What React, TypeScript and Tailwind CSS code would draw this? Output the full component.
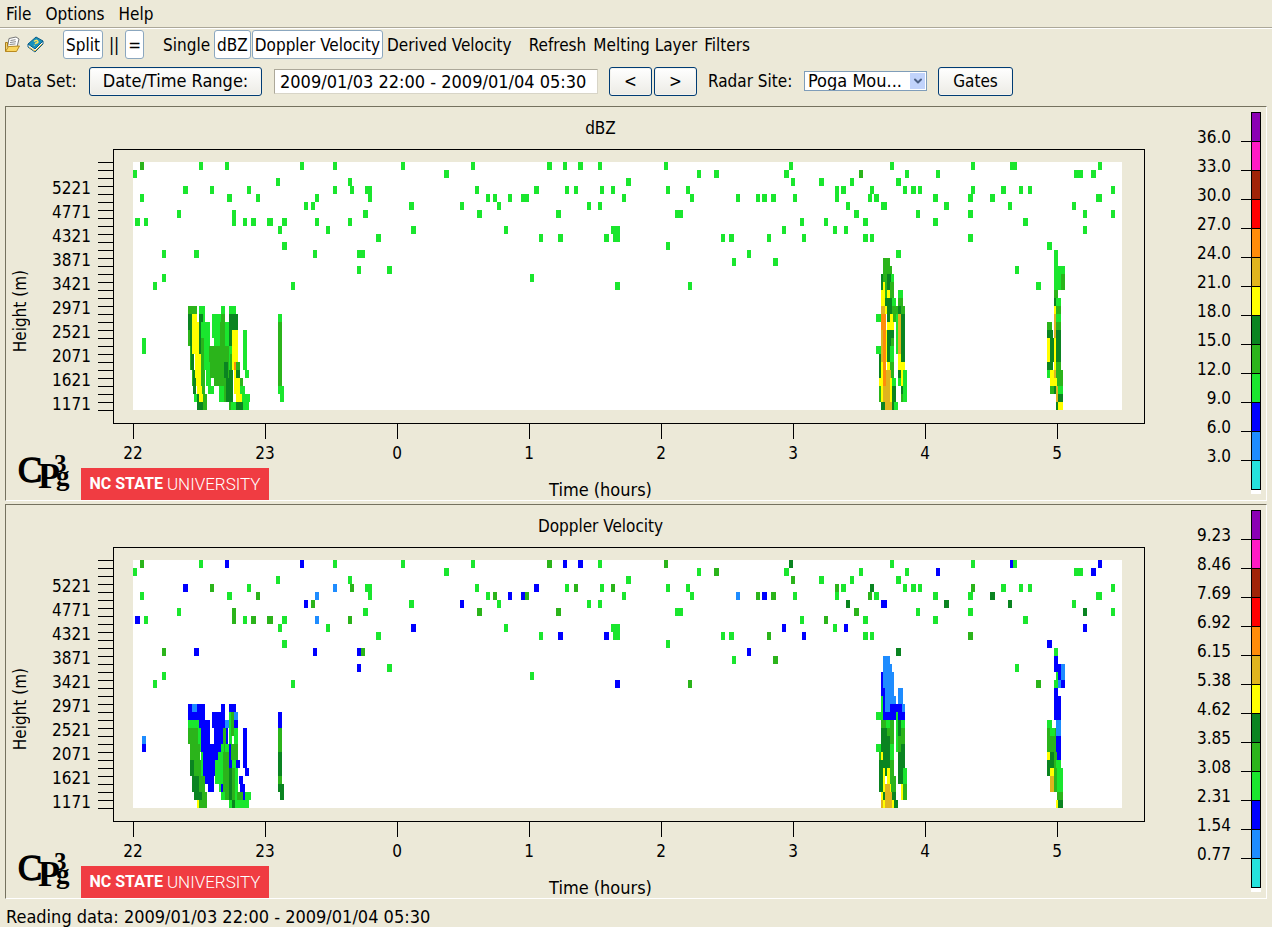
import clsx from "clsx";
import { ChevronDown } from "lucide-react";

const colors: Record<string, string> = {
  T: "#26e2dc",
  L: "#1e8cff",
  B: "#0000ff",
  g: "#1ae62e",
  G: "#2bb41b",
  D: "#0a8421",
  Y: "#ffff00",
  O: "#e0b41e",
  R: "#ff8c0a",
};

// one string per range gate, top gate first: x[dBZ color, velocity color][.width]
const echoes = [
  "140GG 199 225gB 300gB 333 401 471 547gG.5 563gB 578gB.5 598 664gG 789gD 890 971 1010gB 1013 1098gB",
  "133 444.5 697 714gG.5 784.5 859Gg 905 936gB 1074.9 1091gB.5",
  "276 348 626.5 791gG 819.5 850 896.5",
  "183gB.5 210gG 247 333gL 350gG 365.7 475 534gB.5 565 574gG 600 611gG 666 686 835gG 841.5 870gD 903 911.5 918 971gG 1001.5 1019 1028 1111",
  "140 227.5 256gG 315gL 368 486 493gG 508gB 521gB.5 525gG 622 690 736gL 756gG 762gB.5 771gG.5 793 835 868gG 874.5 933.5 968.5 990gD.5 1096.6",
  "304gB 311gG 409.5 460gB 497 587 598 846gD 881gB.6 944gD.5 1008gD 1072",
  "177 232gG 363.5 477gG.5 556gG.5 675.8 854gG.5 916 968.5 1083gD 1111",
  "135gB.5 144 232gG 243 251gG.5 267gG.6 282.5 315gL 348gG 800 824gG 863.5 933.5 1023.5",
  "278 326 411gB.5 504 611.9 782gB 833 844gB 1083gB",
  "376.5 539 558gB.5 604gB.5 613.7 721 729.5 767gG 802gB 863.5 870 968gG.5",
  "282.5 666 1047gB.5",
  "162gG 194gB.5 313gB 357gB 361gG 747gB 896gD.5",
  "732 773gG.5",
  "357gB 387.5 1015",
  "162 530",
  "153 291 615gB.5 688gG 1036gG.5",
];

// x, width, first gate, gates, color
const reflectivityCells = `
188 9 18 1 G,199 6 18 2 g,188 4 19 4 D,188 2 21 2 G,190 2 23 3 G,191 3 23 3 D,192 2 26 2 G,193 3 26 3 D,194 3 29 1 g,197 3 28 2 D,
199 4 19 5 D,201 9 20 3 g,201 4 22 7 G,203 4 29 1 G,204 4 22 4 g,206 5 25 3 g,208 6 28 1 g,197 7 30 1 D,203 4 30 1 G,
192 5 19 1 Y,192 7 20 4 Y,195 6 24 3 Y,196 5 27 1 Y,197 5 28 1 Y,199 4 29 1 Y,
221 4 18 1 g,212 9 19 1 g,221 4 19 2 G,212 8 20 2 g,214 6 22 1 g,220 8 20 3 G,225 4 20 3 g,208 20 23 2 G,205 4 23 2 g,210 18 25 2 G,214 12 27 1 G,
219 6 28 2 g,224 5 28 2 G,225 6 23 5 G,224 4 25 2 D,226 3 27 3 D,229 7 18 1 g,229 4 19 4 D,233 5 19 2 D,229 3 23 4 g,230 3 24 4 G,229 4 26 4 D,
232 6 21 4 Y,232 2 25 1 Y,234 2 25 1 R,236 4 25 1 G,234 3 26 1 Y,236 4 26 1 D,234 6 27 2 Y,236 6 29 1 Y,240 3 27 1 G,240 5 28 1 g,242 8 29 1 g,
229 3 30 1 G,231 5 30 1 g,236 7 30 1 D,243 6 30 1 g,243 4 21 5 g,245 4 26 1 g,
278 4 19 1 g,278 4 20 8 G,278 4 28 1 g,280 4 28 2 g,142 4 22 2 g,
883 7 12 1 G,883 9 13 1 G,881 10 14 2 D,883 4 14 3 G,891 3 14 1 g,890 4 15 2 G,883 2 15 1 Y,881 4 16 2 Y,887 3 16 1 Y,885 8 17 1 D,892 4 17 1 g,
881 4 18 1 O,885 2 18 1 Y,887 6 18 2 D,892 13 18 1 G,893 3 19 1 G,881 5 19 2 R,887 7 20 1 Y,890 3 19 1 Y,
881 3 21 4 O,883 3 21 5 R,886 2 21 4 Y,887 4 21 4 D,890 4 21 2 D,890 4 23 2 g,891 3 22 1 G,881 2 25 2 Y,887 3 25 1 Y,890 4 25 3 G,
879 2 24 3 D,879 4 27 1 Y,879 2 28 2 G,881 2 28 2 Y,883 8 26 4 O,883 3 26 2 R,890 3 27 3 Y,892 4 27 1 g,892 4 28 2 D,
881 4 30 1 D,885 7 30 1 O,892 2 30 1 D,894 4 30 1 g,876 5 19 1 g,876 5 23 1 g,879 2 23 1 g,
898 5 16 1 g,898 5 17 1 G,898 3 18 1 D,896 2 19 5 g,898 3 19 5 O,901 4 19 6 D,898 3 24 1 Y,898 7 25 1 Y,898 3 26 1 D,898 3 27 1 g,901 2 26 2 Y,
903 4 26 4 g,901 2 28 1 D,901 2 29 1 G,
1054 4 11 5 g,1058 3 13 3 g,1061 4 13 1 g,1061 4 14 2 G,1054 4 16 1 G,1054 2 17 1 D,1056 5 17 1 g,1054 2 18 1 Y,1056 5 18 1 G,1054 2 19 4 O,
1056 5 19 1 g,1056 5 20 1 G,1056 5 21 4 D,1054 2 22 4 Y,1047 5 20 1 G,1047 6 21 1 D,1047 3 22 3 Y,1050 4 22 3 D,1047 6 25 1 D,1056 5 25 3 G,
1047 3 26 1 g,1050 4 26 1 Y,1054 2 26 1 O,1050 7 27 1 Y,1050 4 28 1 G,1054 2 28 1 D,1057 6 26 2 G,1057 6 28 1 g,1056 2 28 2 O,1058 5 29 1 D,1056 2 30 1 D,1058 5 30 1 Y`;

const velocityCells = `
188 17 18 2 B,192 5 18 1 L,188 11 20 1 g,199 11 20 3 B,188 10 21 2 G,198 3 21 3 g,190 10 23 2 G,201 21 23 2 B,190 11 25 2 G,190 4 25 2 D,
201 2 24 3 g,203 13 25 2 B,192 8 27 2 D,199 6 27 2 G,205 9 27 1 B,208 6 28 1 B,194 8 29 1 D,202 5 29 1 G,197 2 30 1 Y,199 8 30 1 G,
221 4 18 1 B,212 13 19 2 B,214 14 21 2 B,210 10 23 1 B,223 3 21 4 G,225 4 20 1 L,221 3 23 3 g,225 4 23 3 g,218 5 24 2 g,215 9 25 3 g,223 7 24 5 G,219 2 28 1 g,221 2 28 1 B,221 4 29 1 g,
229 7 18 1 B,229 3 19 4 g,231 3 19 3 G,234 4 19 1 L,234 4 20 1 B,234 4 21 2 g,229 3 23 3 B,231 7 23 2 G,232 5 25 2 g,225 6 26 4 G,229 3 26 4 D,
232 3 26 4 G,235 3 26 4 g,236 4 25 1 B,239 4 27 1 B,240 5 28 1 B,237 6 29 1 G,243 2 29 1 B,245 6 29 1 g,229 20 30 1 g,232 3 30 1 D,
243 4 21 5 B,245 4 26 1 B,278 4 19 2 B,278 4 21 3 G,278 4 24 3 D,278 4 27 1 G,278 4 28 1 D,280 4 28 2 D,142 4 22 1 L,142 4 23 1 B,
883 7 12 1 L,883 9 13 1 L,883 11 14 3 L,881 2 14 2 B,881 4 16 1 B,881 2 17 3 g,885 11 17 2 L,883 2 17 2 B,890 12 18 1 B,883 22 19 1 B,898 5 16 2 L,902 3 18 1 L,
896 2 19 5 g,876 5 19 1 g,876 5 23 1 g,881 13 20 1 G,886 4 20 1 g,881 6 21 5 D,887 7 21 2 G,887 3 22 3 D,890 4 23 2 g,881 2 24 1 Y,879 2 24 5 G,
879 11 25 2 D,890 4 25 4 G,883 2 26 2 Y,887 3 26 2 Y,879 4 27 2 D,883 8 28 1 Y,885 5 28 1 O,881 2 29 1 Y,883 2 29 1 D,885 7 29 2 O,892 4 27 2 G,
881 2 30 1 O,883 2 30 1 Y,892 4 29 1 D,892 2 30 1 Y,894 4 30 1 D,
898 7 20 1 g,898 3 20 2 D,901 4 21 2 G,898 3 22 2 G,901 4 23 3 D,898 3 24 4 D,901 2 26 2 D,903 4 26 2 g,903 4 28 2 G,901 2 28 2 Y,
1054 4 11 1 g,1054 4 12 2 B,1058 4 13 2 B,1061 4 13 2 L,1054 4 15 1 g,1056 2 14 1 g,1058 3 15 1 L,1061 4 15 1 B,1054 4 16 1 B,1054 7 17 3 B,
1056 5 20 2 L,1056 5 22 3 B,1047 5 20 1 g,1047 9 21 3 G,1050 5 21 1 g,1047 3 24 1 Y,1050 4 24 2 D,1047 3 25 2 D,1054 3 24 5 G,1056 5 25 1 g,1057 6 26 3 g,
1050 4 26 1 Y,1050 4 27 2 O,1057 6 29 1 G,1056 2 30 1 Y,1058 5 30 1 D`;

const swatches = [
  "bg-[#8b00b4]",
  "bg-[#ff1ac4]",
  "bg-[#a02408]",
  "bg-[#ff0000]",
  "bg-[#ff8c0a]",
  "bg-[#e0b41e]",
  "bg-[#ffff00]",
  "bg-[#0a8421]",
  "bg-[#2bb41b]",
  "bg-[#1ae62e]",
  "bg-[#0000ff]",
  "bg-[#1e8cff]",
  "bg-[#26e2dc]",
];

const heights = [5221, 4771, 4321, 3871, 3421, 2971, 2521, 2071, 1621, 1171];
const hours = [22, 23, 0, 1, 2, 3, 4, 5];
const dbzLevels = ["36.0", "33.0", "30.0", "27.0", "24.0", "21.0", "18.0", "15.0", "12.0", "9.0", "6.0", "3.0"];
const velocityLevels = ["9.23", "8.46", "7.69", "6.92", "6.15", "5.38", "4.62", "3.85", "3.08", "2.31", "1.54", "0.77"];

function parseEchoes(field: 0 | 1) {
  return echoes.flatMap((row, gate) =>
    row.split(" ").map((token) => {
      const [, x, pair = "gg", width = "4"] = token.match(/^(\d+)([A-Za-z]{2})?(?:\.(\d+))?$/) ?? [];
      return { x: Number(x), w: Number(width), gate, count: 1, color: colors[pair[field]] };
    })
  );
}

function parseCells(cells: string) {
  return cells
    .split(",")
    .map((cell) => cell.trim().split(" "))
    .map(([x, w, gate, count, c]) => ({ x: Number(x), w: Number(w), gate: Number(gate), count: Number(count), color: colors[c] }));
}

function Plot({ field, cells }: { field: 0 | 1; cells: string }) {
  const rects = [...parseEchoes(field), ...parseCells(cells)];
  return (
    <svg viewBox="133 0 989 248" preserveAspectRatio="none" shapeRendering="crispEdges" className="block h-[248px] w-full bg-white">
      {rects.map((r, i) => (
        <rect key={i} x={r.x} y={r.gate * 8} width={r.w} height={r.count * 8} fill={r.color} />
      ))}
    </svg>
  );
}

function Logos() {
  return (
    <div className="absolute bottom-0 left-3 flex items-end">
      <svg width="56" height="48" viewBox="18 452 56 48" className="overflow-visible font-['Liberation_Serif'] font-bold">
        <text x="18" y="482" fontSize="36" fontWeight="400" stroke="#000" strokeWidth="1.4">C</text>
        <text x="38" y="488" fontSize="36">P</text>
        <text x="54" y="472" fontSize="25">3</text>
        <text x="56" y="485" fontSize="27">g</text>
      </svg>
      <div className="ml-[7px] flex h-8 w-[188px] items-center justify-center gap-1 bg-[#f03c42] font-[Roboto,sans-serif] text-[17px] whitespace-nowrap text-white">
        <span className="text-[16px] font-bold">NC STATE</span>
        <span className="font-light">UNIVERSITY</span>
      </div>
    </div>
  );
}

function Legend({ levels }: { levels: string[] }) {
  return (
    <div className="w-[66px] pt-[5px]">
      {swatches.map((swatch, i) => (
        <div key={swatch} className={clsx("flex items-end justify-end", i === 0 ? "h-[30px]" : "h-[29px]")}>
          {levels[i] && <span className="mr-[10px] mb-px leading-2">{levels[i]}</span>}
          {levels[i] && <span className="w-[10px] border-b border-black" />}
          <span className={clsx("h-full w-[10px] border-x border-b border-black", i === 0 && "border-t", swatch)} />
        </div>
      ))}
      <div className="ml-auto h-1 w-[10px] bg-white" />
    </div>
  );
}

type PanelProps = { title: string; field: 0 | 1; cells: string; levels: string[] };

function RadarPanel({ title, field, cells, levels }: PanelProps) {
  return (
    <section className="flex border border-t-[#75725f] border-r-white border-b-white border-l-[#75725f] pr-[5px]">
      <div className="relative min-w-0 flex-1">
        <h2 className="text-center leading-[42px]">{title}</h2>
        <div className="mr-[50px] flex">
          <div className="flex w-7 items-center justify-center pt-[50px]">
            <span className="rotate-180 leading-5 whitespace-nowrap [writing-mode:vertical-rl]">Height (m)</span>
          </div>
          <div className="w-[57px] pt-[27px] text-right leading-6">
            {heights.map((h) => (
              <div key={h}>{h}</div>
            ))}
          </div>
          <div className="ml-[7px] w-[15px] pt-[13px]">
            {Array.from({ length: 32 }, (_, i) => (
              <div key={i} className="h-2 border-t border-black" />
            ))}
          </div>
          <div className="h-[275px] min-w-0 flex-1 border border-black pt-3 pr-[22px] pl-[19px]">
            <Plot field={field} cells={cells} />
          </div>
        </div>
        <div className="mr-[50px] ml-[61px] grid grid-cols-[repeat(8,132fr)_22fr]">
          {hours.map((hour) => (
            <div key={hour} className="flex flex-col items-center">
              <span className="h-[15px] w-px bg-black" />
              <span className="mt-[2px] leading-6">{hour}</span>
            </div>
          ))}
        </div>
        <div className="pt-[15px] text-center text-[18px] leading-5">Time (hours)</div>
        <Logos />
      </div>
      <Legend levels={levels} />
    </section>
  );
}

function OpenIcon() {
  return (
    <svg width="17" height="17" viewBox="0 0 17 17">
      <path d="M5 2.500l7-1.500 3 2-2 8H3.500z" fill="#fff" stroke="#777" />
      <path d="M6.500 4.500l5-.8M6 6.500l6-.8M5.500 8.500l6-.6" stroke="#888" />
      <path d="M1.500 15.500V6.500h2v4" fill="#f3d36b" stroke="#a97c1c" />
      <path d="M1.500 15.500l3-5 11-.5-3 5.500z" fill="#fbd65f" stroke="#b98a20" />
    </svg>
  );
}

function HelpIcon() {
  return (
    <svg width="17" height="17" viewBox="0 0 17 17">
      <path d="M1 8v3l7 5 8-8V5z" fill="#fff" stroke="#0b5c86" />
      <path d="M2 11l6 4 7-7" fill="none" stroke="#e0b53c" />
      <path d="M1 8l8-7 7 4-8 8z" fill="#1791bd" stroke="#0b5c86" />
      <path d="M7 5.500q2-2 3.500-.5t-1.500 2l-1 .8M7 9.500l.5-.4" fill="none" stroke="#ffe45c" strokeWidth="1.500" />
    </svg>
  );
}

function ToolButton({ label, active }: { label: string; active?: boolean }) {
  return (
    <button
      type="button"
      className={clsx("h-[29px] rounded-[3px] border px-[2px] whitespace-nowrap", active ? "border-[#8ba7bf] bg-white" : "border-transparent")}
    >
      {label}
    </button>
  );
}

const pushButton =
  "h-[29px] rounded-[3px] border border-[#003c74] bg-linear-to-b from-white to-[#ecebe5] text-center whitespace-nowrap shadow-[inset_0_0_0_1px_#f4f3ee]";

export default function App() {
  return (
    <div className="min-h-screen bg-[#ece9d8] font-['DejaVu_Sans_Condensed','DejaVu_Sans',sans-serif] text-[17px] leading-6 text-black">
      <nav className="flex h-7 items-center gap-[14px] border-b border-[#aca899] px-[6px]">
        <button type="button">File</button>
        <button type="button">Options</button>
        <button type="button">Help</button>
      </nav>
      <div className="flex items-center border-t border-white px-1 pt-px">
        <button type="button" aria-label="Open">
          <OpenIcon />
        </button>
        <button type="button" aria-label="Help contents" className="ml-[6px]">
          <HelpIcon />
        </button>
        <div className="ml-[19px] flex gap-[3px]">
          <ToolButton label="Split" active />
          <ToolButton label="||" />
          <ToolButton label="=" active />
        </div>
        <div className="ml-4 flex gap-px">
          <ToolButton label="Single" />
          <ToolButton label="dBZ" active />
          <ToolButton label="Doppler Velocity" active />
          <ToolButton label="Derived Velocity" />
        </div>
        <div className="ml-[11px] flex gap-px">
          <ToolButton label="Refresh" />
          <ToolButton label="Melting Layer" />
          <ToolButton label="Filters" />
        </div>
      </div>
      <div className="flex h-[47px] items-center px-[5px] pb-[3px]">
        <label htmlFor="range" className="w-[84px] whitespace-nowrap">Data Set:</label>
        <button type="button" className={clsx(pushButton, "w-[173px] text-[18px]")}>Date/Time Range:</button>
        <input
          id="range"
          readOnly
          value="2009/01/03 22:00 - 2009/01/04 05:30"
          className="ml-3 h-[25px] w-[324px] border border-t-[#aca899] border-r-[#d8d5c8] border-b-[#d8d5c8] border-l-[#aca899] bg-white px-[5px] text-[18px] outline-none"
        />
        <button type="button" className={clsx(pushButton, "ml-[11px] w-[43px]")}>&lt;</button>
        <button type="button" className={clsx(pushButton, "ml-[2px] w-[43px]")}>&gt;</button>
        <label htmlFor="site" className="ml-[11px] w-24 whitespace-nowrap">Radar Site:</label>
        <div className="relative">
          <select id="site" className="block h-5 w-[123px] appearance-none border border-[#7f9db9] bg-white pl-[3px] text-[18px] leading-[18px] outline-none">
            <option>Poga Mou...</option>
          </select>
          <span className="pointer-events-none absolute top-[2px] right-[2px] flex h-4 w-[15px] items-center justify-center bg-[#c1d3fb] text-[#4d6185]">
            <ChevronDown size={12} strokeWidth={4} />
          </span>
        </div>
        <button type="button" className={clsx(pushButton, "ml-[11px] w-[75px]")}>Gates</button>
      </div>
      <main className="mr-[5px] ml-[5px] flex flex-col gap-[3px]">
        <RadarPanel title="dBZ" field={0} cells={reflectivityCells} levels={dbzLevels} />
        <RadarPanel title="Doppler Velocity" field={1} cells={velocityCells} levels={velocityLevels} />
      </main>
      <footer className="px-[6px] pt-2 text-[18px] leading-5">Reading data: 2009/01/03 22:00 - 2009/01/04 05:30</footer>
    </div>
  );
}
